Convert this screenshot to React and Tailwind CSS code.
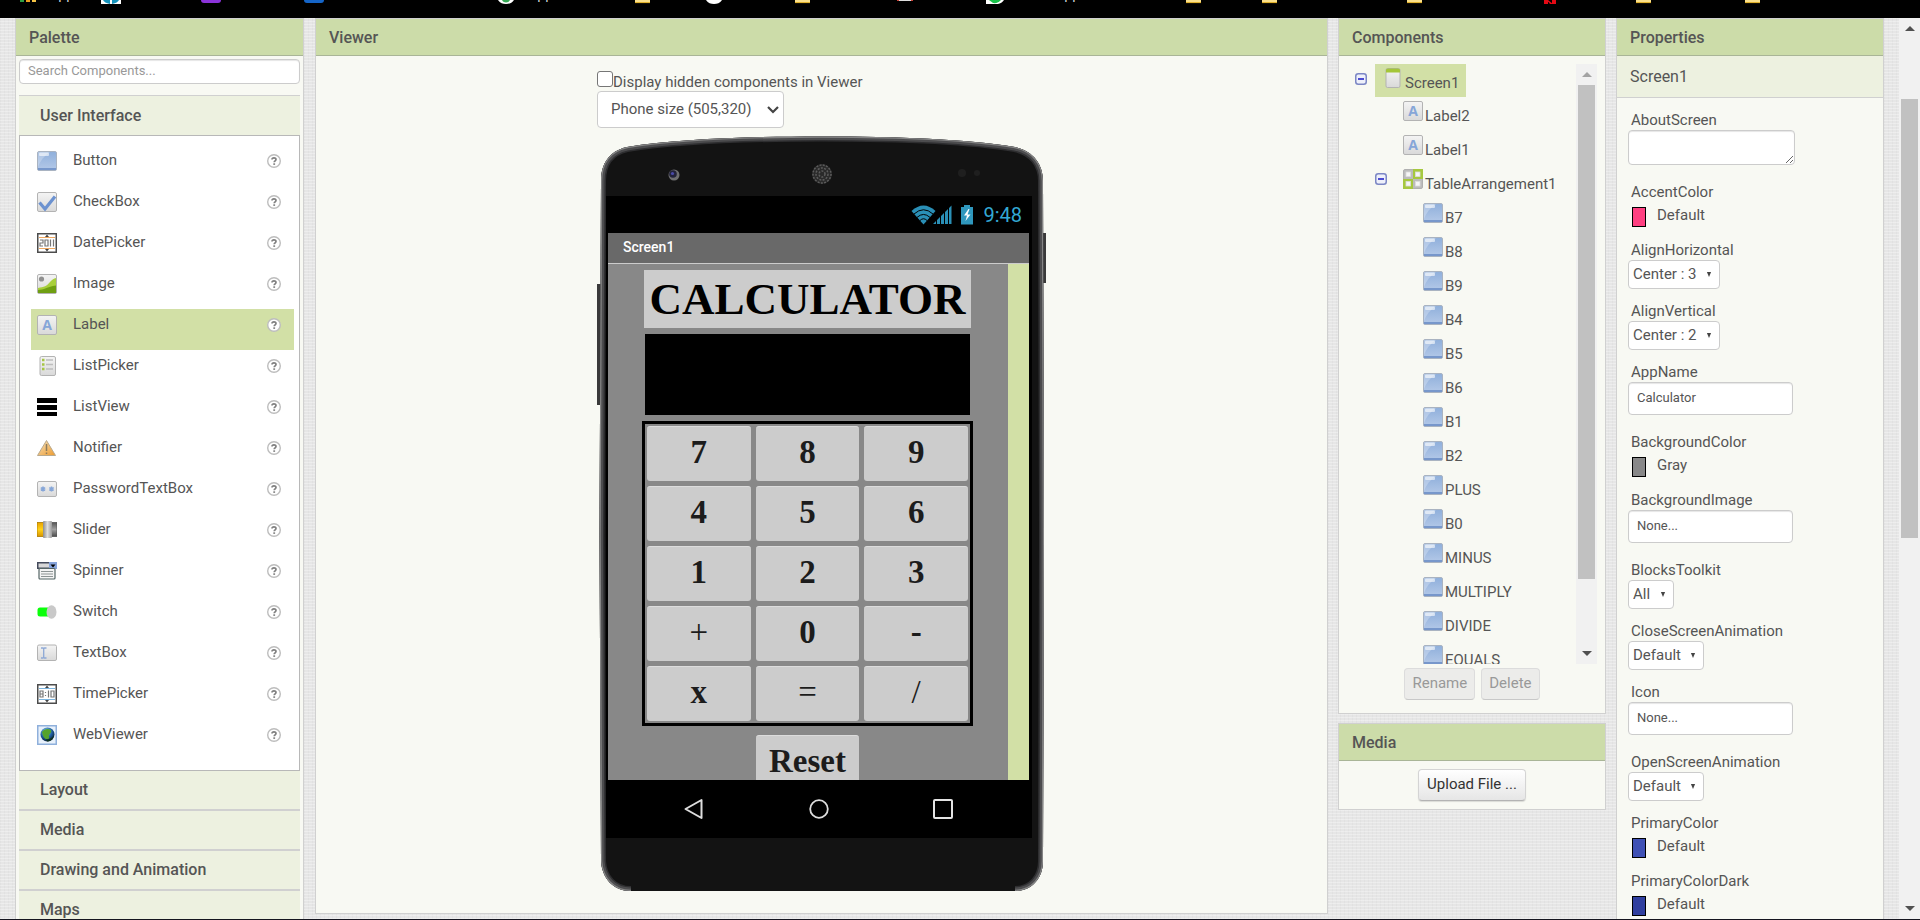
import React from 'react';

const ROBOTO = "font-['Roboto','Liberation_Sans',sans-serif]";
const SERIF = "font-['Liberation_Serif','Times_New_Roman',serif]";

/* ---------- component icons (20 x 20) ---------- */

function IconDefs() {
  return (
    <svg className="absolute h-0 w-0" aria-hidden="true">
      <defs>
        <linearGradient id="blueTile" x1="0" y1="0" x2="0" y2="1">
          <stop offset="0" stopColor="#8fafdb" />
          <stop offset="1" stopColor="#b4c9e8" />
        </linearGradient>
        <linearGradient id="greyTile" x1="0" y1="0" x2="0" y2="1">
          <stop offset="0" stopColor="#f4f4f4" />
          <stop offset="1" stopColor="#d9d9d9" />
        </linearGradient>
        <linearGradient id="amber" x1="0" y1="0" x2="1" y2="1">
          <stop offset="0" stopColor="#f7e3bd" />
          <stop offset="1" stopColor="#ec9a2e" />
        </linearGradient>
        <linearGradient id="yellowBar" x1="0" y1="0" x2="0" y2="1">
          <stop offset="0" stopColor="#e8a200" />
          <stop offset="0.5" stopColor="#ffd21a" />
          <stop offset="1" stopColor="#d99500" />
        </linearGradient>
        <linearGradient id="greyBar" x1="0" y1="0" x2="0" y2="1">
          <stop offset="0" stopColor="#555" />
          <stop offset="0.5" stopColor="#a0a0a0" />
          <stop offset="1" stopColor="#4c4c4c" />
        </linearGradient>
        <linearGradient id="knob" x1="0" y1="0" x2="1" y2="0">
          <stop offset="0" stopColor="#8c8c8c" />
          <stop offset="0.5" stopColor="#dedede" />
          <stop offset="1" stopColor="#999" />
        </linearGradient>
        <radialGradient id="globe" cx="0.4" cy="0.3" r="0.7">
          <stop offset="0" stopColor="#8fd0f5" />
          <stop offset="0.6" stopColor="#1f5fa0" />
          <stop offset="1" stopColor="#08203f" />
        </radialGradient>
      </defs>
    </svg>
  );
}

function GreyTile({ y = 0.5, h = 19 }) {
  return <rect x="0.5" y={y} width="19" height={h} rx="1.5" fill="url(#greyTile)" stroke="#b3b3b3" />;
}

const drawings = {
  Button: (
    <>
      <rect x="0.5" y="0.5" width="19" height="19" rx="1.5" fill="url(#blueTile)" stroke="#a9b3c1" />
      <path d="M1 1h12C7 5 3 10 1 16z" fill="#fff" opacity="0.25" />
      <rect x="2" y="1.5" width="10" height="3.5" rx="1" fill="#fff" opacity="0.6" />
      <rect x="1" y="17" width="18" height="2" fill="#7797cb" />
    </>
  ),
  CheckBox: (
    <>
      <GreyTile />
      <path d="M2.5 10.5l5.5 6.500L18 4.500" fill="none" stroke="#6c92d0" strokeWidth="3.2" />
    </>
  ),
  DatePicker: (
    <>
      <rect x="0.75" y="0.75" width="18.500" height="18.500" fill="#fff" stroke="#4c4c4c" strokeWidth="1.500" />
      <path d="M2 4.500h16M2 15.500h16" stroke="#f0a860" />
      <path d="M8 4l2-2.500L12 4zM8 16l2 2.500L12 16z" fill="#444" />
      <path d="M3 7h3v3H3v3h3M8 7h3v6H8zM13.500 6.500v7M16.500 6.500v7" fill="none" stroke="#777" strokeWidth="1.200" />
    </>
  ),
  Image: (
    <>
      <GreyTile />
      <circle cx="4.500" cy="5" r="2.600" fill="#909090" />
      <path d="M1 14C7 13 10 12 13 8c2-2.500 4-3.500 6-4v15H1z" fill="#a8cf3c" />
      <path d="M1 16c6 0 9-3 18-4.500V19H1z" fill="#6f9f12" />
    </>
  ),
  Label: (
    <>
      <GreyTile />
      <text x="10" y="15" textAnchor="middle" fontSize="14" fontWeight="700" fontFamily="Open Sans, sans-serif" fill="#86a6d8">
        A
      </text>
    </>
  ),
  ListPicker: (
    <>
      <rect x="3" y="0.5" width="15.500" height="19" rx="1.500" fill="url(#greyTile)" stroke="#b3b3b3" />
      <path d="M5 4h2.500M5 8.500h2.500M5 13h2.500" stroke="#a6c544" strokeWidth="2.500" />
      <path d="M9 4h7M9 8.500h7M9 13h7" stroke="#bdbdbd" strokeWidth="1.500" />
    </>
  ),
  ListView: (
    <>
      <rect y="1" width="20" height="5" fill="#000" />
      <rect y="8" width="20" height="5" fill="#000" />
      <rect y="15" width="20" height="4" fill="#000" />
    </>
  ),
  Notifier: (
    <>
      <path d="M9.500 2.500L18.500 17.500H0.500z" fill="url(#amber)" stroke="#b9a98c" />
      <path d="M9.500 6v7M9.500 14.500v1.500" stroke="#8d7b5c" strokeWidth="1.500" />
    </>
  ),
  PasswordTextBox: (
    <>
      <GreyTile y={2.5} h={15} />
      <path d="M6 7.500v5M3.800 8.700l4.400 2.600M8.200 8.700l-4.400 2.600M14.500 7.500v5M12.300 8.700l4.400 2.600M16.700 8.700l-4.400 2.600" stroke="#86a6d8" strokeWidth="1.500" />
    </>
  ),
  Slider: (
    <>
      <rect x="0" y="2.500" width="8" height="14" fill="url(#yellowBar)" stroke="#a87900" strokeWidth="0.800" />
      <rect x="12" y="2.500" width="8" height="14" fill="url(#greyBar)" stroke="#555" strokeWidth="0.800" />
      <rect x="6" y="1" width="9" height="17" rx="1" fill="url(#knob)" />
    </>
  ),
  Spinner: (
    <>
      <rect x="0.750" y="1.750" width="18.500" height="5.500" fill="#d8d8d8" stroke="#444b5c" strokeWidth="1.500" />
      <rect x="12" y="1" width="8" height="7" fill="#86a3da" />
      <path d="M13.500 3.500h5L16 6.500z" fill="#000" />
      <rect x="2" y="7.500" width="16" height="10.500" rx="1" fill="#f4f4f4" stroke="#566" strokeWidth="1.200" />
      <path d="M4 10.500h12M4 13h12M4 15.500h12" stroke="#8d9494" />
    </>
  ),
  Switch: (
    <>
      <rect x="0.500" y="5.500" width="14" height="9" rx="2.500" fill="#0bff0b" />
      <ellipse cx="14.500" cy="10" rx="5" ry="6.800" fill="#c9c9c9" />
    </>
  ),
  TextBox: (
    <>
      <GreyTile y={2} h={15.5} />
      <path d="M4 5h2l.7.7L7.500 5h2M4 15h2l.7-.7.8.7h2M6.700 5.500v9" fill="none" stroke="#8ea9d6" strokeWidth="1.300" />
    </>
  ),
  TimePicker: (
    <>
      <rect x="0.750" y="0.750" width="18.500" height="18.500" fill="#fff" stroke="#4c4c4c" strokeWidth="1.500" />
      <path d="M2 4.500h16M2 15.500h16" stroke="#7cb4de" />
      <path d="M8 4l2-2.500L12 4zM8 16l2 2.500L12 16z" fill="#444" />
      <path d="M3 7h3v6H3zM3 10h3M8.500 8v1M8.500 11v1M11.500 6.500v7M14 7h3v6h-3z" fill="none" stroke="#777" strokeWidth="1.200" />
    </>
  ),
  WebViewer: (
    <>
      <rect x="0.750" y="0.750" width="18.500" height="18.500" fill="#e8f1fb" stroke="#8fb0dc" strokeWidth="1.500" />
      <circle cx="10.500" cy="9.500" r="7" fill="url(#globe)" />
      <path d="M5 7c2-3 6-4 9-2 1 3-1 3-2 5s2 3-1 4-5-2-6-7z" fill="#55a32c" />
      <path d="M9 14c3 1 6-1 8-4-.5 4-3 6.500-7 6.500z" fill="#0e3312" opacity="0.8" />
    </>
  ),
  Screen: (
    <>
      <rect x="3" y="0.500" width="14" height="19" rx="1.500" fill="url(#greyTile)" stroke="#b3b3b3" />
      <path d="M3 2a1.500 1.500 0 0 1 1.500-1.500h11A1.500 1.500 0 0 1 17 2v2.500H3z" fill="#a4c639" />
    </>
  ),
  Table: (
    <>
      <rect x="0.500" y="0.500" width="19" height="19" rx="1.500" fill="#bcbcbc" stroke="#b0b0b0" />
      <rect x="10" y="0" width="10" height="10" fill="#a6c83f" />
      <rect y="10" width="10" height="10" fill="#a6c83f" />
      <g fill="#f6f6f6" stroke="#dcdcdc" strokeWidth="0.800">
        <rect x="3" y="3" width="4.500" height="4.500" />
        <rect x="12.500" y="3" width="4.500" height="4.500" />
        <rect x="3" y="12.500" width="4.500" height="4.500" />
        <rect x="12.500" y="12.500" width="4.500" height="4.500" />
      </g>
    </>
  ),
};

function Icon({ name }) {
  return (
    <svg viewBox="0 0 20 20" className="h-5 w-5 shrink-0" aria-hidden="true">
      {drawings[name]}
    </svg>
  );
}

function HelpIcon() {
  return (
    <svg viewBox="0 0 14 14" className="h-[14px] w-[14px] shrink-0" aria-hidden="true">
      <circle cx="7" cy="7" r="6.300" fill="#fff" stroke="#bdbdbd" strokeWidth="1.400" />
      <path d="M5 5.500C5 3.300 9 3.300 9 5.400 9 6.800 7.200 6.900 7.200 8.300" fill="none" stroke="#808080" strokeWidth="1.700" />
      <rect x="6.300" y="9.300" width="1.800" height="1.600" fill="#808080" />
    </svg>
  );
}

function Collapse() {
  return (
    <svg viewBox="0 0 12 12" className="h-3 w-3 shrink-0" aria-hidden="true">
      <rect x="0.750" y="0.750" width="10.500" height="10.500" rx="2.500" fill="#eef0fa" stroke="#7c87c4" strokeWidth="1.500" />
      <path d="M3 6h6" stroke="#2323c8" strokeWidth="1.600" />
    </svg>
  );
}

/* ---------- bookmark bar, scrolled partly out of view ---------- */

function Folder({ className }) {
  return (
    <svg viewBox="0 0 15 4" className={`h-1 w-[15px] shrink-0 ${className}`} aria-hidden="true">
      <rect width="15" height="3" fill="#fbe08a" />
      <rect y="2.200" width="15" height="0.900" fill="#d9a514" />
    </svg>
  );
}

function BookmarkBar() {
  return (
    <div className="flex h-[18px] shrink-0 items-start overflow-hidden bg-black text-[13px] leading-5 text-[#e8eaed] font-['Open_Sans',sans-serif]" aria-hidden="true">
      <svg viewBox="0 0 16 2" className="ml-5 h-[2px] w-4 shrink-0">
        <rect width="4" height="2" fill="#2ea043" />
        <rect x="6" width="4" height="2" fill="#f0a020" />
        <rect x="12" width="4" height="2" fill="#f6c445" />
      </svg>
      <div className="ml-[14px] -mt-4 w-[51px]">Apps</div>
      <svg viewBox="0 0 20 4" className="h-1 w-5 shrink-0">
        <rect width="20" height="4" fill="#fff" />
        <path d="M2 0h7v4C5 3 3 2 2 0zM11 0h7c-1 2-3 3-7 4z" fill="#1593bb" />
      </svg>
      <div className="ml-20 h-[3px] w-5 rounded-b-sm bg-[#8b33d9]" />
      <div className="ml-[83px] h-[3px] w-5 rounded-b-sm bg-[#1565c8]" />
      <svg viewBox="0 0 16 4" className="ml-[174px] h-1 w-4 shrink-0">
        <path d="M0 0h16c-2 3-5 4-8 4S2 3 0 0z" fill="#fff" />
        <path d="M4 0h8c-1 1.800-2.500 2.500-4 2.500S5 1.800 4 0z" fill="#34a853" />
      </svg>
      <div className="ml-[15px] -mt-4 w-[106px]">App</div>
      <Folder className="" />
      <svg viewBox="0 0 16 4" className="ml-[56px] h-1 w-4 shrink-0">
        <path d="M0 0h16c-2 3-5 4-8 4S2 3 0 0z" fill="#fff" />
      </svg>
      <Folder className="ml-[73px]" />
      <div className="ml-[87px] h-px w-4 border-x-2 border-[#d04338] bg-[#ddd]" />
      <svg viewBox="0 0 18 4" className="ml-[73px] h-1 w-[18px] shrink-0">
        <path d="M0 0h18c-2 3-5 4.500-9 4L0 4z" fill="#fff" />
        <path d="M3 0h12c-2 2.500-5 3.500-8 3z" fill="#19c24a" />
      </svg>
      <div className="ml-[14px] -mt-4 w-[168px]">WhatsApp</div>
      <Folder className="" />
      <Folder className="ml-[61px]" />
      <Folder className="ml-[130px]" />
      <svg viewBox="0 0 12 4" className="ml-[122px] h-1 w-3 shrink-0">
        <path d="M0 0h4v4H0zM8 0h4v4H8zM4 0l5 4H6L3 0z" fill="#e50914" />
      </svg>
      <Folder className="ml-20" />
      <Folder className="ml-[94px]" />
    </div>
  );
}

/* ---------- shared panel parts ---------- */

function Panel({ title, className = '', children }) {
  return (
    <section className={`border border-[#d0d0d0] bg-[#f8f9f3] ${className}`}>
      <h2 className="h-[37px] border-b border-[#a9b597] bg-[#ccdca9] px-[13px] text-base leading-[37px] font-medium text-[#555]">{title}</h2>
      {children}
    </section>
  );
}

function Arrow({ up, className = '' }) {
  return (
    <svg viewBox="0 0 10 5" className={`h-[5px] w-[10px] ${className}`} aria-hidden="true">
      <path d={up ? 'M0 5L5 0l5 5z' : 'M0 0h10L5 5z'} fill="currentColor" />
    </svg>
  );
}

function ScrollBar({ thumb, upColor = 'text-[#505050]' }) {
  return (
    <div className="flex w-[21px] shrink-0 flex-col items-center justify-between bg-[#f1f1f1]" aria-hidden="true">
      <div className={`flex h-[21px] items-center ${upColor}`}>
        <Arrow up />
      </div>
      <div className="flex w-full flex-1 flex-col items-center">
        <div className={`w-[17px] bg-[#c1c1c1] ${thumb}`} />
      </div>
      <div className="flex h-[21px] items-center text-[#505050]">
        <Arrow />
      </div>
    </div>
  );
}

/* ---------- palette ---------- */

const paletteItems = [
  'Button', 'CheckBox', 'DatePicker', 'Image', 'Label', 'ListPicker', 'ListView', 'Notifier',
  'PasswordTextBox', 'Slider', 'Spinner', 'Switch', 'TextBox', 'TimePicker', 'WebViewer',
];

function Palette() {
  return (
    <Panel title="Palette" className="w-[289px] shrink-0">
      <div className="px-[3px] pt-[3px]">
        <input
          type="text"
          aria-label="Search Components"
          placeholder="Search Components..."
          className="block h-[25px] w-full rounded-[4px] border border-[#ccc] bg-white px-2 pb-[2px] text-[13px] text-[#555] shadow-[inset_0_1px_1px_rgba(0,0,0,0.1)] placeholder:text-[#999]"
        />
        <h3 className="mt-[11px] border-t border-[#d0d0d0] bg-[#edf1e0]">
          <button type="button" className="block h-[39px] w-full px-[21px] text-left text-base font-medium text-[#555]">
            User Interface
          </button>
        </h3>
        <ul className="border border-[#b8b8b8] bg-white pt-[9px] pr-[5px] pb-[10px] pl-[11px]">
          {paletteItems.map((name) => (
            <li key={name} className={`flex h-[41px] items-start pt-[6px] pr-[13px] pl-[6px] ${name === 'Label' ? 'bg-[#d2e0a6]' : ''}`}>
              <Icon name={name} />
              <span className="flex-1 pl-4 text-[15px] leading-[18px] text-[#555]">{name}</span>
              <a href="#help" aria-label={`${name} help`} className="pt-[3px]">
                <HelpIcon />
              </a>
            </li>
          ))}
        </ul>
        {['Layout', 'Media', 'Drawing and Animation', 'Maps'].map((name) => (
          <h3 key={name} className="border-b-2 border-[#d0d0d0] bg-[#edf1e0]">
            <button type="button" className="block h-[38px] w-full px-[21px] text-left text-base font-medium text-[#555]">
              {name}
            </button>
          </h3>
        ))}
      </div>
    </Panel>
  );
}

/* ---------- viewer ---------- */

const phoneOutline =
  'M4 45C4 28 12 15 30 11C80 3 150 0.500 224 0.500C300 0.500 370 3 418 11C436 15 446 28 446 45L447 400L446 725C446 742 435 755 418 755H34C16 755 5 742 4 725L2.500 400Z';

function PhoneBody() {
  return (
    <svg viewBox="0 0 449 755" className="absolute inset-0 h-full w-full" aria-hidden="true">
      <defs>
        <clipPath id="phoneClip">
          <path d={phoneOutline} />
        </clipPath>
      </defs>
      <rect x="0" y="148" width="8" height="121" fill="#3a3a3a" />
      <rect x="444" y="97" width="5" height="50" fill="#3a3a3a" />
      <g clipPath="url(#phoneClip)">
        <path d={phoneOutline} fill="#131313" stroke="#2e2e30" strokeWidth="10" />
        <path d={phoneOutline} fill="none" stroke="#4c4c4e" strokeWidth="7" />
        <path d={phoneOutline} fill="none" stroke="#858585" strokeWidth="2.500" />
        <rect x="34" y="748" width="384" height="7" fill="#131313" />
      </g>
      <circle cx="77" cy="39" r="5.500" fill="#6e6e70" />
      <circle cx="76" cy="38" r="3.800" fill="#22223a" />
      <circle cx="75.500" cy="37.500" r="1.600" fill="#4a4aa8" />
      <circle cx="225" cy="38" r="10" fill="#2a2a2a" />
      <g stroke="#5c5c5c" strokeWidth="1.500" strokeDasharray="2 1.300" fill="none">
        <circle cx="225" cy="38" r="9" />
        <circle cx="225" cy="38" r="6" />
        <circle cx="225" cy="38" r="3" />
      </g>
      <circle cx="365" cy="37" r="4" fill="#1f1f1f" />
      <circle cx="380" cy="37" r="3" fill="#1f1f1f" />
    </svg>
  );
}

function StatusBar() {
  return (
    <div className="flex h-[37px] items-center justify-end pr-[10px]">
      <svg viewBox="0 0 64 22" className="h-[22px] w-16" aria-hidden="true">
        <path d="M0.500 7Q12.500-4 24.500 7L12.500 20.500z" fill="#2a8fb6" />
        <g fill="none" stroke="#000" strokeWidth="1">
          <path d="M3 10Q12.500 1.500 22 10" />
          <path d="M6 13.400Q12.500 7.500 19 13.400" />
          <path d="M9 16.500Q12.500 13 16 16.500" />
        </g>
        <path d="M22 20l3-3v3zM26 20v-4l3-3v7zM30 20v-8l3-3v11zM34 20V8l3-3v15zM38 20V4l2.500-2.500V20z" fill="#2a8fb6" />
        <path d="M50 3h3V1h6v2h3v17.500H50z" fill="#2f97bd" />
        <path d="M57.500 5L53 11.500h3L54.500 17l5-6.500h-3L58.500 5z" fill="#fff" />
      </svg>
      <span className="pl-2 text-[20px] leading-6 text-[#33a8d4]">9:48</span>
    </div>
  );
}

const keys = ['7', '8', '9', '4', '5', '6', '1', '2', '3', '+', '0', '-', 'x', '=', '/'];
const keyClass = `h-[55px] rounded-[3px] border-t border-[#dcdcdc] bg-[#ccc] pb-[2px] text-[33px] text-[#1c1c1c] ${SERIF}`;

function Viewer() {
  return (
    <Panel title="Viewer" className="min-w-0 flex-1">
      <div className="mx-auto w-[449px] pt-[15px] pb-[22px] text-[15px] text-[#555]">
        <div className="flex h-5 items-start">
          <input
            id="hidden-components"
            type="checkbox"
            className="h-4 w-4 shrink-0 appearance-none rounded-[3px] border border-[#767676] bg-white checked:bg-[#0b6fe8]"
          />
          <label htmlFor="hidden-components" className="leading-[22px]">
            Display hidden components in Viewer
          </label>
        </div>
        <div className="relative w-[187px]">
          <select aria-label="Screen size" className="block h-[37px] w-full appearance-none rounded-[4px] border border-[#ccc] bg-white pr-7 pl-[13px]">
            <option>Phone size (505,320)</option>
          </select>
          <svg viewBox="0 0 12 8" className="pointer-events-none absolute top-[15px] right-[5px] h-2 w-3" aria-hidden="true">
            <path d="M1 1l5 5 5-5" fill="none" stroke="#444" strokeWidth="2.200" />
          </svg>
        </div>
        <div className="relative mt-2 pt-[60px] pr-[14px] pb-[53px] pl-[9px]">
          <PhoneBody />
          <div className="relative bg-black">
            <StatusBar />
            <div className="mr-[3px] ml-[2px]">
              <div className="h-[31px] border-b border-[#ccc] bg-[#696969] px-[15px] text-sm leading-[28px] font-medium text-white">Screen1</div>
              <div className="flex h-[516px] bg-[#888]">
                <div className="flex flex-1 flex-col items-center gap-[6px] overflow-hidden pt-[6px] pr-px">
                  <div className={`h-[58px] w-[327px] shrink-0 bg-[#ccc] text-center text-[45px] leading-[58px] font-bold text-black ${SERIF}`}>CALCULATOR</div>
                  <div className="h-[81px] w-[325px] shrink-0 bg-black" />
                  <div className="grid w-[331px] shrink-0 grid-cols-3 gap-[5px] border-[3px] border-black p-[2px]">
                    {keys.map((k) => (
                      <button key={k} type="button" className={`${keyClass} ${'+=/'.includes(k) ? 'font-normal' : 'font-bold'}`}>
                        {k}
                      </button>
                    ))}
                  </div>
                  <button type="button" className={`mt-[3px] w-[103px] shrink-0 font-bold ${keyClass}`}>
                    Reset
                  </button>
                </div>
                <div className="w-[21px] bg-[#d2e0a6]" />
              </div>
            </div>
            <div className="flex h-[58px] items-center justify-between pr-[79px] pl-[78px]">
              <svg viewBox="0 0 20 22" className="h-[22px] w-5" aria-hidden="true">
                <path d="M1.500 11L17.500 2v18z" fill="none" stroke="#ddd" strokeWidth="2" strokeLinejoin="round" />
              </svg>
              <svg viewBox="0 0 20 20" className="h-5 w-5" aria-hidden="true">
                <circle cx="10" cy="10" r="8.800" fill="none" stroke="#ddd" strokeWidth="1.800" />
              </svg>
              <svg viewBox="0 0 20 20" className="h-5 w-5" aria-hidden="true">
                <rect x="1" y="1" width="18" height="18" rx="1" fill="none" stroke="#e4e4e4" strokeWidth="2" />
              </svg>
            </div>
          </div>
        </div>
      </div>
    </Panel>
  );
}

/* ---------- components tree ---------- */

const tree = [
  ['Label2', 'Label', 1],
  ['Label1', 'Label', 1],
  ['TableArrangement1', 'Table', 1],
  ['B7', 'Button', 2],
  ['B8', 'Button', 2],
  ['B9', 'Button', 2],
  ['B4', 'Button', 2],
  ['B5', 'Button', 2],
  ['B6', 'Button', 2],
  ['B1', 'Button', 2],
  ['B2', 'Button', 2],
  ['PLUS', 'Button', 2],
  ['B0', 'Button', 2],
  ['MINUS', 'Button', 2],
  ['MULTIPLY', 'Button', 2],
  ['DIVIDE', 'Button', 2],
  ['EQUALS', 'Button', 2],
];

function ComponentTree() {
  return (
    <ul className="min-w-0 flex-1 text-[15px] text-[#555]">
      <li className="flex h-[33px] items-start">
        <span className="pt-[9px] pr-2 pl-4">
          <Collapse />
        </span>
        <span className="flex h-[33px] items-start bg-[#d2e0a6] pt-1 pr-[7px] pl-2">
          <Icon name="Screen" />
          <span className="pl-[2px] leading-[31px]">Screen1</span>
        </span>
      </li>
      {tree.map(([name, icon, depth]) => (
        <li key={name} className={`flex h-[34px] items-start pt-1 ${icon === 'Table' ? 'pl-9' : depth === 1 ? 'pl-16' : 'pl-[84px]'}`}>
          {icon === 'Table' && (
            <span className="pt-1 pr-4">
              <Collapse />
            </span>
          )}
          <Icon name={icon} />
          <span className="pl-[2px] leading-[31px]">{name}</span>
        </li>
      ))}
    </ul>
  );
}

const disabledButton = 'h-8 rounded-[4px] border border-[#dcdcdc] border-b-[#c8c8c8] bg-[#ececea] px-[7px] pb-[2px] text-[#999]';

function ComponentsColumn() {
  return (
    <div className="flex w-[268px] shrink-0 flex-col gap-[9px]">
      <Panel title="Components">
        <div className="mt-2 mr-2 flex h-[600px] overflow-hidden">
          <ComponentTree />
          <ScrollBar thumb="h-[494px]" upColor="text-[#a3a3a3]" />
        </div>
        <div className="flex justify-center gap-[6px] pt-1 pb-[13px] text-[15px]">
          <button type="button" disabled className={disabledButton}>
            Rename
          </button>
          <button type="button" disabled className={disabledButton}>
            Delete
          </button>
        </div>
      </Panel>
      <Panel title="Media">
        <div className="flex justify-center py-2">
          <button
            type="button"
            className="h-8 rounded-[4px] border border-[#d4d4d4] border-b-[#b3b3b3] bg-linear-to-b from-white to-[#e6e6e6] px-2 pb-[2px] text-[15px] text-[#333] shadow-[0_1px_1px_rgba(0,0,0,0.12)]"
          >
            Upload File ...
          </button>
        </div>
      </Panel>
    </div>
  );
}

/* ---------- properties ---------- */

const properties = [
  ['AboutScreen', 'area', ''],
  ['AccentColor', 'color', 'Default', 'bg-[#ff4081]'],
  ['AlignHorizontal', 'choice', 'Center : 3'],
  ['AlignVertical', 'choice', 'Center : 2'],
  ['AppName', 'text', 'Calculator'],
  ['BackgroundColor', 'color', 'Gray', 'bg-[#888888]'],
  ['BackgroundImage', 'text', 'None...'],
  ['BlocksToolkit', 'choice', 'All'],
  ['CloseScreenAnimation', 'choice', 'Default'],
  ['Icon', 'text', 'None...'],
  ['OpenScreenAnimation', 'choice', 'Default'],
  ['PrimaryColor', 'color', 'Default', 'bg-[#3f51b5]'],
  ['PrimaryColorDark', 'color', 'Default', 'bg-[#303f9f]'],
];

const fieldClass = 'block rounded-[4px] border border-[#ccc] bg-white text-[#555]';

function Control({ id, kind, value, swatch }) {
  if (kind === 'area') {
    return <textarea id={id} className={`${fieldClass} mb-[17px] h-[35px] w-[167px] resize shadow-[inset_0_1px_1px_rgba(0,0,0,0.1)]`} />;
  }
  if (kind === 'text') {
    return (
      <input
        id={id}
        type="text"
        defaultValue={value}
        className={`${fieldClass} mb-[17px] h-[33px] w-[165px] px-2 pb-[2px] text-[13px] shadow-[inset_0_1px_1px_rgba(0,0,0,0.1)]`}
      />
    );
  }
  if (kind === 'choice') {
    return (
      <div className="relative mb-3 w-fit">
        <select id={id} className={`${fieldClass} h-[29px] appearance-none pr-[22px] pb-px pl-1 text-[15px]`}>
          <option>{value}</option>
        </select>
        <svg viewBox="0 0 6 6" className="pointer-events-none absolute top-[12px] right-2 h-[5px] w-[6px]" aria-hidden="true">
          <path d="M0.500 0h5L3 6z" fill="#444" />
        </svg>
      </div>
    );
  }
  return (
    <button id={id} type="button" className="mb-[13px] flex h-[25px] items-end pl-1 text-left">
      <span className={`h-5 w-[14px] border border-black ${swatch}`} />
      <span className="pb-[2px] pl-[11px] leading-5">{value}</span>
    </button>
  );
}

function Properties() {
  return (
    <Panel title="Properties" className="w-[268px] shrink-0">
      <div className="h-[42px] border-b border-[#d0d0d0] bg-[#edf1e0] px-[13px] text-base leading-[41px] text-[#555]">Screen1</div>
      <div className="pt-3 pl-[11px] text-[15px] text-[#555]">
        {properties.map(([name, kind, value, swatch]) => (
          <div key={name}>
            <label htmlFor={name} className="block pl-[3px] leading-5">
              {name}
            </label>
            <Control id={name} kind={kind} value={value} swatch={swatch} />
          </div>
        ))}
      </div>
    </Panel>
  );
}

export default function App() {
  return (
    <div className={`flex h-screen flex-col overflow-hidden border-b border-[#15151f] ${ROBOTO}`}>
      <IconDefs />
      <BookmarkBar />
      <div className="flex min-h-0 flex-1 bg-[#e6e6e6] bg-[repeating-linear-gradient(0deg,rgba(255,255,255,0.3)_0_1px,transparent_1px_3px),repeating-linear-gradient(90deg,rgba(0,0,0,0.025)_0_1px,transparent_1px_4px)]">
        <main className="flex min-w-0 flex-1 items-start pr-[15px] pl-[15px]">
          <div className="flex min-w-0 flex-1 items-start gap-[11px]">
            <Palette />
            <Viewer />
          </div>
          <div className="flex shrink-0 items-start gap-[10px] pl-[10px]">
            <ComponentsColumn />
            <Properties />
          </div>
        </main>
        <ScrollBar thumb="mt-[60px] h-[439px]" />
      </div>
    </div>
  );
}
